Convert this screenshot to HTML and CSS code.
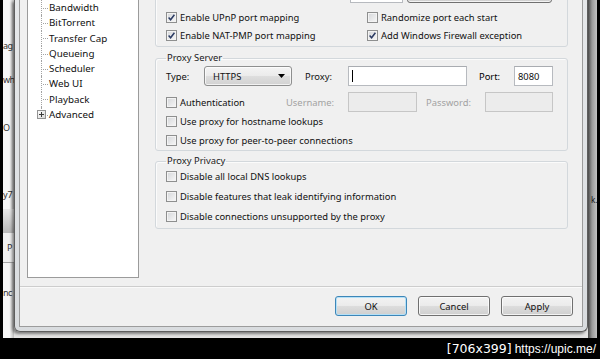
FILE: index.html
```html
<!DOCTYPE html>
<html lang="en">
<head>
  <meta charset="UTF-8" />
  <meta name="viewport" content="width=device-width, initial-scale=1.0"/>
  <title>Preferences - Connection</title>
  <link rel="stylesheet" href="styles.css">
</head>
<body>
  <div class="screen">
    <div class="desk">
      <!-- window behind the dialog, only a strip shows -->
      <div class="bg-left">
        <div class="frag frag-1">ag</div>
        <div class="frag frag-2">wh</div>
        <div class="frag frag-3">O</div>
        <div class="frag frag-4">y 7</div>
        <div class="bg-band"></div>
        <div class="bg-tab">P</div>
        <div class="frag frag-5">nc</div>
      </div>

      <div class="dialog">
        <div class="dialog-body">
          <div class="dialog-main">
            <ul class="tree">
              <li>Bandwidth</li>
              <li>BitTorrent</li>
              <li>Transfer Cap</li>
              <li>Queueing</li>
              <li>Scheduler</li>
              <li>Web UI</li>
              <li>Playback</li>
              <li class="branch">
                <svg class="expander" width="9" height="9" viewBox="0 0 9 9">
                  <defs>
                    <linearGradient id="exp" x1="0" y1="0" x2="1" y2="1">
                      <stop offset="0" stop-color="#ffffff"/>
                      <stop offset="1" stop-color="#d6d6d6"/>
                    </linearGradient>
                  </defs>
                  <rect x="0.5" y="0.5" width="8" height="8" fill="url(#exp)" stroke="#939393"/>
                  <path d="M2 4.5h5M4.5 2v5" stroke="#3a3a3a" stroke-width="1"/>
                </svg>
                Advanced
              </li>
            </ul>

            <div class="pages">
              <div class="group listen">
                <!-- only the bottom edge of the port field and button shows -->
                <div class="port-row">
                  <div class="textbox port-in"></div>
                  <div class="btn random"></div>
                </div>
                <div class="check-grid">
                  <div class="check">
                    <span class="cb"><svg width="9" height="9" viewBox="0 0 9 9"><path d="M1.6 4.6 3.6 6.8 7.4 1.8" fill="none" stroke="#2b3b63" stroke-width="1.5"/></svg></span>
                    Enable UPnP port mapping
                  </div>
                  <div class="check"><span class="cb"></span>Randomize port each start</div>
                  <div class="check">
                    <span class="cb"><svg width="9" height="9" viewBox="0 0 9 9"><path d="M1.6 4.6 3.6 6.8 7.4 1.8" fill="none" stroke="#2b3b63" stroke-width="1.5"/></svg></span>
                    Enable NAT-PMP port mapping
                  </div>
                  <div class="check">
                    <span class="cb"><svg width="9" height="9" viewBox="0 0 9 9"><path d="M1.6 4.6 3.6 6.8 7.4 1.8" fill="none" stroke="#2b3b63" stroke-width="1.5"/></svg></span>
                    Add Windows Firewall exception
                  </div>
                </div>
              </div>

              <fieldset class="group proxy">
                <legend>Proxy Server</legend>
                <div class="type-row">
                  <span class="lbl lbl-type">Type:</span>
                  <div class="combo">
                    HTTPS
                    <svg class="arrow" width="7" height="4" viewBox="0 0 7 4"><path d="M0 0h7L3.5 4z" fill="#000"/></svg>
                  </div>
                  <span class="lbl lbl-proxy">Proxy:</span>
                  <div class="textbox proxy-in"><span class="caret"></span></div>
                  <span class="lbl lbl-port">Port:</span>
                  <div class="textbox port">8080</div>
                </div>
                <div class="auth-row">
                  <div class="check auth"><span class="cb"></span>Authentication</div>
                  <span class="lbl off lbl-user">Username:</span>
                  <div class="textbox off user-in"></div>
                  <span class="lbl off lbl-pass">Password:</span>
                  <div class="textbox off pass-in"></div>
                </div>
                <div class="check row"><span class="cb"></span>Use proxy for hostname lookups</div>
                <div class="check row"><span class="cb"></span>Use proxy for peer-to-peer connections</div>
              </fieldset>

              <fieldset class="group privacy">
                <legend>Proxy Privacy</legend>
                <div class="privacy-rows">
                  <div class="check row"><span class="cb"></span>Disable all local DNS lookups</div>
                  <div class="check row"><span class="cb"></span>Disable features that leak identifying information</div>
                  <div class="check row"><span class="cb"></span>Disable connections unsupported by the proxy</div>
                </div>
              </fieldset>
            </div>
          </div>

          <div class="buttons">
            <div class="btn default">OK</div>
            <div class="btn">Cancel</div>
            <div class="btn">Apply</div>
          </div>
        </div>
      </div>

      <div class="bg-right">
        <div class="frag-k">k.</div>
      </div>
    </div>

    <div class="watermark">
      <span class="wm-size">[706x399]</span>
      <span class="wm-url">https://upic.me/</span>
    </div>
  </div>
</body>
</html>
```

FILE: styles.css
```css
* {
  box-sizing: border-box;
}

html, body {
  margin: 0;
  height: 100%;
}

body {
  background: #000;
  font-family: 'Noto Sans', 'Open Sans', sans-serif;
  font-size: 9.4px;
  color: #111;
  overflow: hidden;
}

.screen {
  width: 600px;
  height: 359px;
  display: flex;
  flex-direction: column;
}

.desk {
  height: 338px;
  margin: 0 3px;
  display: flex;
  background: #e4e4e4;
}

/* background window strips */
.bg-left {
  width: 11px;
  overflow: hidden;
  display: flex;
  flex-direction: column;
  background: linear-gradient(to right, #f7f7f7 60%, #bdbdbd);
  color: #333;
  font-size: 9px;
  letter-spacing: -0.6px;
  white-space: nowrap;
}

.frag {
  line-height: 14px;
}

.frag-1 { margin-top: 39px; }
.frag-2 { margin-top: 20px; }
.frag-3 { margin-top: 34px; }
.frag-4 { margin-top: 53px; letter-spacing: -1.2px; }
.frag-5 { margin-top: 23px; }

.bg-band {
  margin-top: 7px;
  height: 24px;
  background: linear-gradient(#e8e8e8, #b9b9b9);
}

.bg-tab {
  height: 30px;
  padding: 8px 0 0 4px;
  line-height: 14px;
  background: #f1f1f1;
  border-bottom: 1px solid #a5a5a5;
}

.bg-right {
  width: 9px;
  overflow: hidden;
  background: linear-gradient(to right, #4a4a4a, #9a9a9a 45%, #c2c2c2);
  font-size: 8px;
}

.frag-k {
  margin-top: 193px;
  padding-left: 3px;
  line-height: 14px;
}

/* dialog frame */
.dialog {
  width: 574px;
  height: 332px;
  padding: 0 4px 4px;
  background: linear-gradient(#e6e8ea, #d9dcdf);
  border: 1px solid #5e5e5e;
  border-top: 0;
  border-radius: 0 0 6px 6px;
  box-shadow: -2px 2px 3px rgba(0, 0, 0, 0.45);
}

.dialog-body {
  height: 100%;
  display: flex;
  flex-direction: column;
  background: #f0f0f0;
  border: 1px solid #9c9c9c;
  border-top: 0;
}

.dialog-main {
  height: 286px;
  display: flex;
  padding: 0 14px 8px 7px;
}

/* tree */
.tree {
  width: 112px;
  margin: -2px 16px 0 0;
  padding: 1px 0 0;
  list-style: none;
  background: #fff;
  border: 1px solid #9b9b9b;
  font-size: 9.8px;
}

.tree li {
  position: relative;
  height: 15.3px;
  line-height: 15.3px;
  padding-left: 21px;
  white-space: nowrap;
}

.tree li::before {
  content: "";
  position: absolute;
  left: 13px;
  top: 0;
  bottom: 0;
  border-left: 1px dotted #a3a3a3;
}

.tree li::after {
  content: "";
  position: absolute;
  left: 15px;
  top: 50%;
  width: 5px;
  border-top: 1px dotted #a3a3a3;
}

.tree li.branch::before {
  bottom: 50%;
}

.expander {
  position: absolute;
  left: 9px;
  top: 3px;
  z-index: 1;
}

/* option pages */
.pages {
  flex: 1;
  display: flex;
  flex-direction: column;
}

.group {
  border: 1px solid #d3d8dc;
  border-radius: 3px;
  box-shadow: inset 1px 1px 0 #fbfbfb;
}

fieldset.group {
  margin: 0;
  min-width: 0;
  padding: 0 10px;
}

fieldset.group legend {
  padding: 0 1px;
  line-height: 14px;
  color: #1a1a1a;
}

.listen {
  margin-top: -30px;
  padding: 9px 10px 2px;
}

.port-row {
  height: 23px;
  display: flex;
  align-items: flex-end;
  justify-content: flex-end;
  padding-right: 5px;
}

.port-in {
  width: 53px;
  height: 20px;
  margin-right: 4px;
}

.random {
  width: 145px;
}

.check-grid {
  margin-top: 5px;
  display: grid;
  grid-template-columns: 201px 1fr;
  grid-auto-rows: 18px;
}

.check {
  display: flex;
  align-items: center;
  gap: 3px;
  white-space: nowrap;
}

.cb {
  width: 11px;
  height: 11px;
  flex: none;
  display: flex;
  align-items: center;
  justify-content: center;
  border: 1px solid #8e8f8f;
  background: linear-gradient(135deg, #d4d6d9, #f7f7f7);
  box-shadow: inset 0 0 0 1px #f3f3f3;
}

.proxy {
  margin-top: 4px !important;
}

.type-row {
  height: 22px;
  display: flex;
  align-items: center;
}

.lbl {
  flex: none;
  white-space: nowrap;
}

.lbl-type { width: 38px; }
.lbl-proxy { width: 43px; }
.lbl-port { width: 35px; color: #000; }
.lbl-user { width: 62px; }
.lbl-pass { width: 59px; }

.off {
  color: #a2a2a2;
}

.combo {
  width: 88px;
  height: 20px;
  margin-right: 13px;
  display: flex;
  align-items: center;
  padding: 0 6px 0 8px;
  border: 1px solid #8e8f8f;
  border-radius: 3px;
  background: linear-gradient(#f4f4f4, #ebebeb 49%, #dedede 50%, #d2d2d2);
  box-shadow: inset 0 0 0 1px rgba(255, 255, 255, 0.7);
}

.combo .arrow {
  margin-left: auto;
}

.textbox {
  height: 20px;
  display: flex;
  align-items: center;
  padding-left: 3px;
  background: #fff;
  border: 1px solid #b7babf;
  border-top-color: #a9acb1;
}

.textbox.off {
  height: 20px;
  background: #ececec;
  border-color: #c6c6c6;
}

.proxy-in {
  width: 119px;
  margin-right: 12px;
}

.caret {
  width: 1px;
  height: 12px;
  background: #000;
}

.port {
  width: 39px;
}

.auth-row {
  height: 20px;
  margin-top: 5px;
  display: flex;
  align-items: center;
}

.auth {
  width: 120px;
}

.user-in {
  width: 69px;
  margin-right: 9px;
}

.pass-in {
  width: 68px;
}

.proxy .row {
  height: 19px;
}

.privacy {
  margin-top: 3px !important;
}

.privacy-rows {
  margin-top: -2px;
  padding-bottom: 2px;
}

.privacy .row {
  height: 20px;
}

/* buttons */
.btn {
  height: 20px;
  display: flex;
  align-items: center;
  justify-content: center;
  border: 1px solid #707070;
  border-radius: 3px;
  background: linear-gradient(#f3f3f3, #ebebeb 49%, #dddddd 50%, #cfcfcf);
  box-shadow: inset 0 0 0 1px rgba(255, 255, 255, 0.75);
  white-space: nowrap;
}

.buttons {
  display: flex;
  justify-content: flex-end;
  gap: 11px;
  padding: 9px 9px 0 0;
  border-top: 1px solid #cdcdcd;
  box-shadow: inset 0 1px 0 #fafafa;
}

.buttons .btn {
  width: 72px;
}

.btn.default {
  border-color: #3d86b8;
  box-shadow: inset 0 0 0 1px #b4e0f7;
}

/* upload watermark */
.watermark {
  height: 21px;
  display: flex;
  align-items: center;
  justify-content: flex-end;
  gap: 3px;
  padding-right: 4px;
  color: #fff;
}

.wm-size {
  font-family: 'DejaVu Sans', sans-serif;
  font-size: 12.5px;
}

.wm-url {
  font-family: 'Liberation Sans', sans-serif;
  font-size: 12px;
}
```
